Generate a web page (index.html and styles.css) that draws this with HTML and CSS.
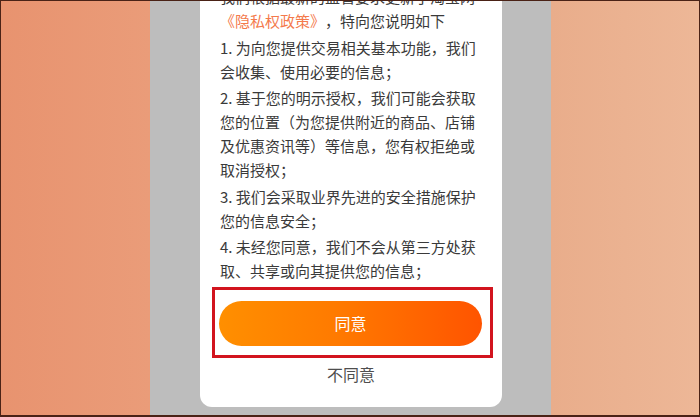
FILE: index.html
```html
<!DOCTYPE html>
<html lang="zh-CN">
<head>
<meta charset="utf-8">
<title>隐私权政策</title>
<link rel="stylesheet" href="styles.css">
</head>
<body>
<div class="frame">
  <div class="side side-left"></div>
  <div class="mask">
    <div class="card">
      <div class="content">
        <p class="para">我们根据最新的监管要求更新了淘宝网<span class="link">《隐私权政策》</span>，特向您说明如下</p>
        <p class="para">1. 为向您提供交易相关基本功能，我们会收集、使用必要的信息；</p>
        <p class="para">2. 基于您的明示授权，我们可能会获取您的位置（为您提供附近的商品、店铺及优惠资讯等）等信息，您有权拒绝或取消授权；</p>
        <p class="para">3. 我们会采取业界先进的安全措施保护您的信息安全；</p>
        <p class="para">4. 未经您同意，我们不会从第三方处获取、共享或向其提供您的信息；</p>
      </div>
      <div class="highlight">
        <button class="agree" type="button">同意</button>
      </div>
      <div class="disagree">不同意</div>
    </div>
  </div>
  <div class="side side-right"></div>
</div>
</body>
</html>
```
FILE: styles.css
```css
* { box-sizing: border-box; }
html, body { margin: 0; padding: 0; }
body {
  width: 700px;
  height: 417px;
  overflow: hidden;
  font-family: "Noto Sans CJK SC", "Noto Sans", sans-serif;
}
.frame {
  width: 700px;
  height: 417px;
  display: flex;
  border: 1px solid #4a2216;
  border-bottom-width: 2px;
  overflow: hidden;
}
.side { height: 100%; }
.side-left {
  width: 149px;
  background: linear-gradient(90deg, #e8936f 0%, #ea9c79 100%);
}
.side-right {
  width: 148px;
  background: linear-gradient(90deg, #e9ad8b 0%, #edb797 100%);
}
.mask {
  width: 401px;
  height: 100%;
  background: #bdbdbd;
  padding-left: 50px;
}
.card {
  width: 302px;
  height: 406px;
  background: #ffffff;
  border-radius: 0 0 12px 12px;
  overflow: hidden;
  display: flex;
  flex-direction: column;
}
.content {
  margin-top: -16px;
  padding: 0 20px;
  color: #3a3a3a;
  font-size: 15px;
  line-height: 24px;
  text-spacing-trim: space-all;
}
.para { margin: 0 0 2.5px; }
.para:last-child { margin-bottom: 0; }
.link { color: #f47a4c; }
.highlight {
  margin: 4px 0 0 12px;
  width: 281px;
  border: 3px solid #d2141e;
  padding: 11px 8px 9px 4px;
}
.agree {
  display: block;
  width: 263px;
  height: 45px;
  border: none;
  border-radius: 23px;
  margin: 0;
  padding: 0;
  background: linear-gradient(90deg, #ff8f00 0%, #ff7a00 45%, #ff5400 100%);
  color: #ffffff;
  font-family: "Noto Sans CJK SC", "Noto Sans", sans-serif;
  font-size: 16px;
  line-height: 45px;
  text-align: center;
}
.disagree {
  margin-top: 4px;
  text-align: center;
  font-size: 16px;
  line-height: 24px;
  color: #4e4e4e;
}
```
